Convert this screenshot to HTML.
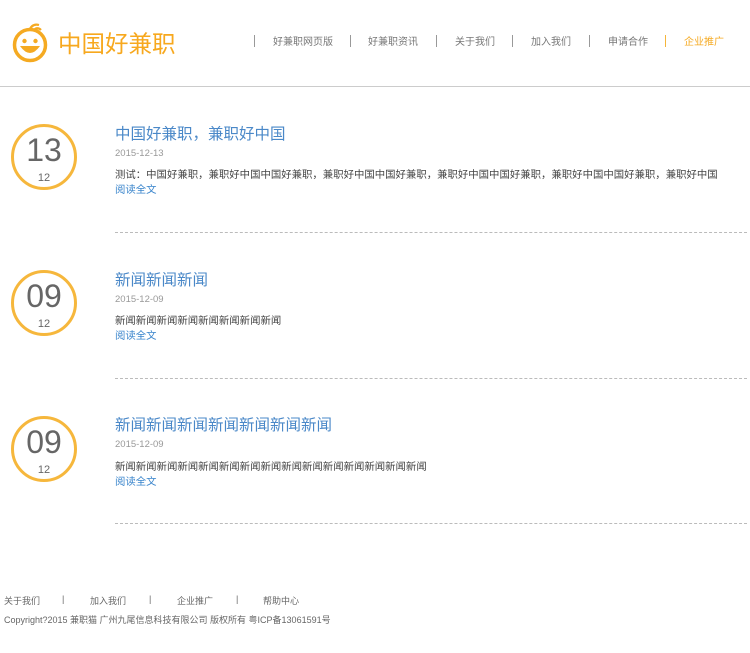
<!DOCTYPE html>
<html><head><meta charset="utf-8"><style>
*{margin:0;padding:0;box-sizing:border-box}
body{width:750px;height:653px;background:#fff;font-family:"Liberation Sans","Noto Sans CJK SC",sans-serif;position:relative;overflow:hidden;color:#555}
.hd{position:absolute;left:0;top:0;width:750px;height:87px;border-bottom:1px solid #ccc}
.logo{position:absolute;left:58px;top:25px;font-size:23.5px;color:#f7a81e;letter-spacing:0}
.nav{position:absolute;top:33px;font-size:10px;color:#777;white-space:nowrap}
.sep{position:absolute;top:35px;width:1px;height:12px;background:#999}
.c{position:absolute;left:11px;width:66px;height:66px;border:3px solid #f6b73c;border-radius:50%;text-align:center}
.c b{display:block;font-weight:normal;font-size:32px;color:#666;margin-top:5px;line-height:36px}
.c i{display:block;font-style:normal;font-size:11px;color:#666;line-height:14px;margin-top:3px}
.t{position:absolute;left:115px;font-size:15.5px;color:#4a88c8;white-space:nowrap}
.d{position:absolute;left:115px;font-size:9.5px;color:#999}
.x{position:absolute;left:115px;font-size:10.4px;color:#444;white-space:nowrap}
.r{position:absolute;left:115px;font-size:10.4px;color:#3a85cc}
.l{position:absolute;left:115px;width:632px;border-top:1px dashed #bbb}
.f{position:absolute;font-size:9px;color:#666;white-space:nowrap}
</style></head><body>
<div class="hd">
<svg style="position:absolute;left:11px;top:20px" width="40" height="44" viewBox="0 0 40 44">
<path d="M18 11 Q21 3 28 5 M22 11 Q26 6 30 10" stroke="#f5aa22" stroke-width="2.2" fill="none"/>
<circle cx="19" cy="25" r="15.5" fill="#fff" stroke="#f5aa22" stroke-width="3.5"/>
<circle cx="13.5" cy="21" r="2.2" fill="#f5aa22"/><circle cx="24.5" cy="21" r="2.2" fill="#f5aa22"/>
<path d="M9 26 Q19 40 29 26 Z" fill="#f5aa22"/>
</svg>
<div class="logo">中国好兼职</div>
<div class="sep" style="left:254px"></div><div class="nav" style="left:273px">好兼职网页版</div>
<div class="sep" style="left:350px"></div><div class="nav" style="left:368px">好兼职资讯</div>
<div class="sep" style="left:436px"></div><div class="nav" style="left:455px">关于我们</div>
<div class="sep" style="left:512px"></div><div class="nav" style="left:531px">加入我们</div>
<div class="sep" style="left:589px"></div><div class="nav" style="left:608px">申请合作</div>
<div class="sep" style="left:665px;background:#f5b53a"></div><div class="nav" style="left:684px;color:#f5aa22">企业推广</div>
</div>

<div class="c" style="top:124px"><b>13</b><i>12</i></div>
<div class="t" style="top:122px">中国好兼职，兼职好中国</div>
<div class="d" style="top:148px">2015-12-13</div>
<div class="x" style="top:166px">测试：中国好兼职，兼职好中国中国好兼职，兼职好中国中国好兼职，兼职好中国中国好兼职，兼职好中国中国好兼职，兼职好中国</div>
<div class="r" style="top:181px">阅读全文</div>
<div class="l" style="top:232px"></div>

<div class="c" style="top:270px"><b>09</b><i>12</i></div>
<div class="t" style="top:268px">新闻新闻新闻</div>
<div class="d" style="top:294px">2015-12-09</div>
<div class="x" style="top:312px">新闻新闻新闻新闻新闻新闻新闻新闻</div>
<div class="r" style="top:327px">阅读全文</div>
<div class="l" style="top:378px"></div>

<div class="c" style="top:416px"><b>09</b><i>12</i></div>
<div class="t" style="top:413px">新闻新闻新闻新闻新闻新闻新闻</div>
<div class="d" style="top:439px">2015-12-09</div>
<div class="x" style="top:458px">新闻新闻新闻新闻新闻新闻新闻新闻新闻新闻新闻新闻新闻新闻新闻</div>
<div class="r" style="top:473px">阅读全文</div>
<div class="l" style="top:523px"></div>

<div class="f" style="top:594px;left:4px">关于我们</div>
<div class="f" style="top:594px;left:62px">|</div>
<div class="f" style="top:594px;left:90px">加入我们</div>
<div class="f" style="top:594px;left:149px">|</div>
<div class="f" style="top:594px;left:177px">企业推广</div>
<div class="f" style="top:594px;left:236px">|</div>
<div class="f" style="top:594px;left:263px">帮助中心</div>
<div class="f" style="top:613px;left:4px">Copyright?2015 兼职猫 广州九尾信息科技有限公司 版权所有 粤ICP备13061591号</div>
</body></html>
